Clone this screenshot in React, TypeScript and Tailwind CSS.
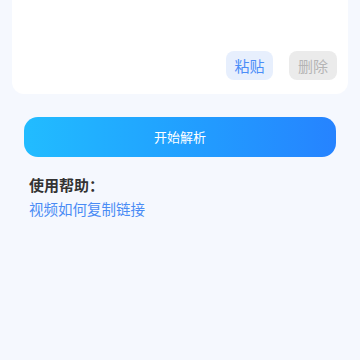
export default function App() {
  return (
    <div
      className="min-h-[360px] w-full bg-[#f5f8fe] px-3"
      style={{ fontFamily: '"Noto Sans CJK SC", "Noto Sans", sans-serif' }}
    >
      <div className="flex h-[94px] items-end justify-end gap-4 rounded-b-xl bg-white pb-[14px] pr-[11px]">
        <button className="h-[29px] w-[47px] rounded-lg bg-[#e7effd] text-[15px] leading-none text-[#4b8df8]">
          粘贴
        </button>
        <button className="h-[29px] w-[48px] rounded-lg bg-[#ebebeb] text-[15px] leading-none text-[#b5b5b5]">
          删除
        </button>
      </div>
      <div className="px-3 pt-[23px]">
        <button className="flex h-10 w-full items-center justify-center rounded-[14px] bg-gradient-to-r from-[#22bcff] to-[#2683ff] text-[13px] text-white">
          开始解析
        </button>
        <div className="px-[5px] pt-[18px]">
          <div className="text-[15px] font-bold leading-[20px] text-[#333333]">使用帮助：</div>
          <div className="pt-[4px] text-[14.5px] leading-[20px] text-[#4a8cf5]">视频如何复制链接</div>
        </div>
      </div>
    </div>
  );
}
